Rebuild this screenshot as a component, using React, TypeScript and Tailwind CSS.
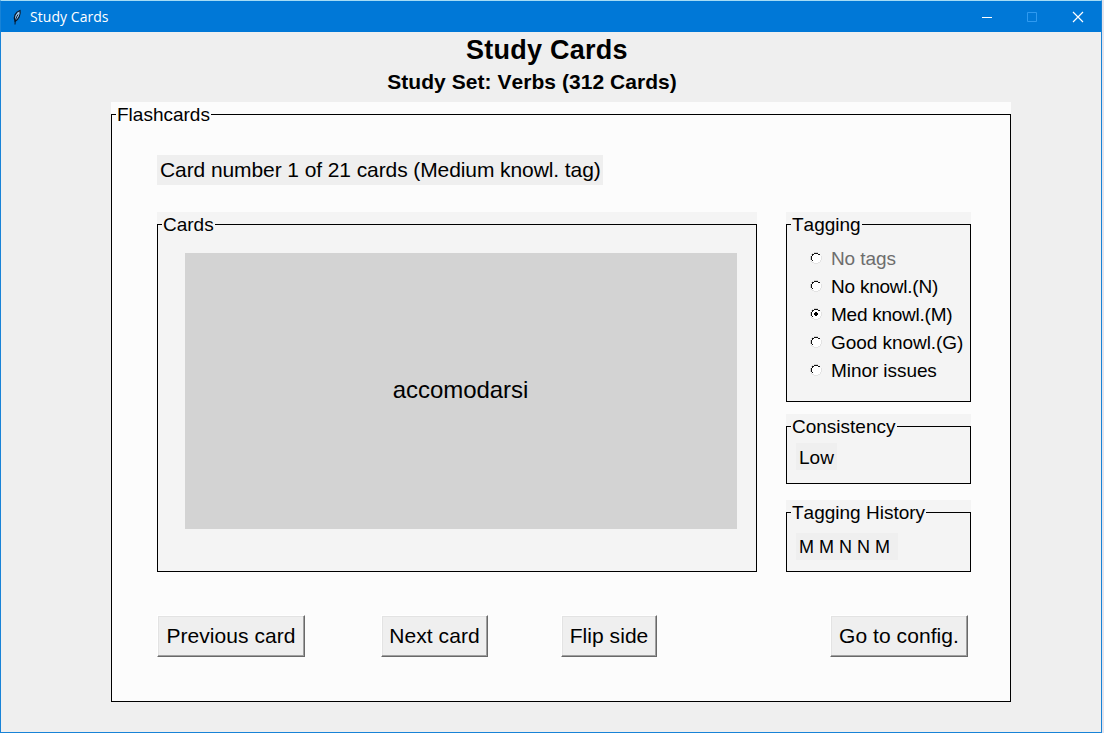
import React from "react";

type FrameProps = {
  title: string;
  className: string;
  tone: string;
  children?: React.ReactNode;
};

function LabelFrame({ title, className, tone, children }: FrameProps) {
  return (
    <section className={`relative flex flex-col pt-3 ${tone} ${className}`}>
      <div className="flex flex-1 flex-col border border-black">{children}</div>
      <h2 className={`absolute left-[5px] top-0 h-6 whitespace-nowrap px-px text-[19px] leading-[25px] ${tone}`}>
        {title}
      </h2>
    </section>
  );
}

function PushButton({ label, className }: { label: string; className: string }) {
  return (
    <button
      className={`h-[42px] whitespace-nowrap border border-b-[#696969] border-r-[#696969] border-l-white border-t-white bg-[#efefef] text-[21px] leading-[38px] tracking-[0.06px] shadow-[inset_-1px_-1px_0_#a0a0a0,inset_1px_1px_0_#e3e3e3] ${className}`}
    >
      {label}
    </button>
  );
}

function RadioMark({ checked }: { checked: boolean }) {
  return (
    <svg className="relative -top-px" width="12" height="12" viewBox="0 0 12 12" shapeRendering="crispEdges">
      <path d="M4 1h4v1h2v2h1v4h-1v2H8v1H4v-1H2V8H1V4h1V2h2z" fill="#fff" />
      <path d="M11 4h1v4h-1zM10 8h1v2h-1zM8 10h2v1H8zM4 11h4v1H4zM2 10h2v1H2z" fill="#e3e3e3" />
      <path d="M4 0h4v1H4zM2 1h1v1H2zM1 2h1v1H1zM0 4h1v4H0zM1 9h1v1H1z" fill="#d4d4d4" />
      <path d="M4 1h4v1H4zM8 2h2v1H8zM2 2h2v1H2zM1 4h1v4H1zM2 3h1v1H2zM2 8h1v1H2z" fill="#111" />
      {checked && <path d="M5 4h2v1h1v2H7v1H5V7H4V5h1z" fill="#000" />}
    </svg>
  );
}

const tags = [
  { label: "No tags", style: "text-[#6d6d6d] tracking-[-0.1px]" },
  { label: "No knowl.(N)", style: "tracking-[-0.23px]" },
  { label: "Med knowl.(M)", style: "tracking-[-0.25px]" },
  { label: "Good knowl.(G)", style: "tracking-[-0.05px]" },
  { label: "Minor issues", style: "tracking-[-0.07px]" },
];

export default function App() {
  return (
    <div className="flex h-[733px] w-[1104px] bg-[#e4e4ec] font-['Liberation_Sans',Arial,sans-serif] text-black [font-kerning:none]">
      <div className="flex h-[733px] w-[1102px] flex-col border border-[#1883d7] border-t-[#a5dcf5] bg-[#efefef]">
        <header className="flex h-[31px] shrink-0 items-center bg-[#0078d7] font-['Open_Sans',sans-serif] text-white">
          <svg className="ml-2 shrink-0" width="16" height="16" viewBox="0 0 16 16">
            <path d="M6 12.500C4 8 6.500 3 11 1.500c1 4-1.500 9-5 11z" fill="#9dc8ee" stroke="#06172b" strokeWidth="1.200" />
            <path d="M6 15.500c0-4 1-7 3-10" fill="none" stroke="#06172b" />
          </svg>
          <h1 className="ml-[5px] flex-1 text-[14px] leading-[30px] tracking-[0.05px]">Study Cards</h1>
          <svg className="mr-[17px]" width="103" height="12" viewBox="0 0 103 12" fill="none">
            <path d="M1 6.500h10" stroke="#fff" />
            <path d="M46.500 1.500h9v9h-9z" stroke="#2f9af0" />
            <path d="M92 1l10 10M102 1L92 11" stroke="#fff" strokeWidth="1.200" />
          </svg>
        </header>

        <main className="flex flex-1 flex-col pl-[110px]">
          <div className="flex h-[70px] w-[842px] flex-col items-center">
            <p className="mt-[3px] h-8 pl-[30px] text-[27px] font-bold leading-[31px] tracking-[0.25px]">Study Cards</p>
            <p className="h-[30px] text-[21px] font-bold leading-[29px] tracking-[0.05px]">Study Set: Verbs (312 Cards)</p>
          </div>

          <LabelFrame title="Flashcards" tone="bg-[#fcfcfc]" className="h-[600px] w-[900px]">
            <div className="flex flex-1 flex-col pl-[45px] pt-10">
              <p className="h-[30px] w-[446px] whitespace-nowrap bg-[#efefef] pl-[3px] text-[21px] leading-[29px] tracking-[-0.09px]">
                Card number 1 of 21 cards (Medium knowl. tag)
              </p>

              <div className="mt-[27px] flex h-[360px] gap-[29px]">
                <LabelFrame title="Cards" tone="bg-[#f4f4f4]" className="w-[600px]">
                  <div className="ml-[27px] mt-7 flex h-[276px] w-[552px] items-center justify-center bg-[#d3d3d3] pb-0.5 pr-px text-[24px] tracking-[-0.04px]">
                    accomodarsi
                  </div>
                </LabelFrame>

                <div className="flex w-[185px] flex-col">
                  <LabelFrame title="Tagging" tone="bg-[#f4f4f4]" className="h-[190px]">
                    <div className="flex flex-col pl-[23px] pt-5">
                      {tags.map((tag, i) => (
                        <label
                          key={tag.label}
                          className={`flex h-7 items-center whitespace-nowrap text-[19px] leading-7 ${tag.style}`}
                        >
                          <RadioMark checked={i === 2} />
                          <span className="ml-[9px]">{tag.label}</span>
                        </label>
                      ))}
                    </div>
                  </LabelFrame>

                  <LabelFrame title="Consistency" tone="bg-[#f4f4f4]" className="mt-3 h-[70px]">
                    <p className="ml-[9px] mt-4 h-[27px] w-[41px] whitespace-nowrap bg-[#efefef] pl-[3px] text-[19px] leading-[29px]">
                      Low
                    </p>
                  </LabelFrame>

                  <LabelFrame title="Tagging History" tone="bg-[#f4f4f4]" className="mt-4 h-[72px]">
                    <p className="ml-[9px] mt-5 h-[27px] w-[102px] whitespace-nowrap bg-[#efefef] pl-[3px] text-[18px] leading-[29px]">
                      M M N N M
                    </p>
                  </LabelFrame>
                </div>
              </div>

              <div className="mt-[43px] flex">
                <PushButton label="Previous card" className="w-[148px]" />
                <PushButton label="Next card" className="ml-[76px] w-[107px]" />
                <PushButton label="Flip side" className="ml-[73px] w-[96px]" />
                <PushButton label="Go to config." className="ml-[173px] w-[138px]" />
              </div>
            </div>
          </LabelFrame>
        </main>
      </div>
    </div>
  );
}
